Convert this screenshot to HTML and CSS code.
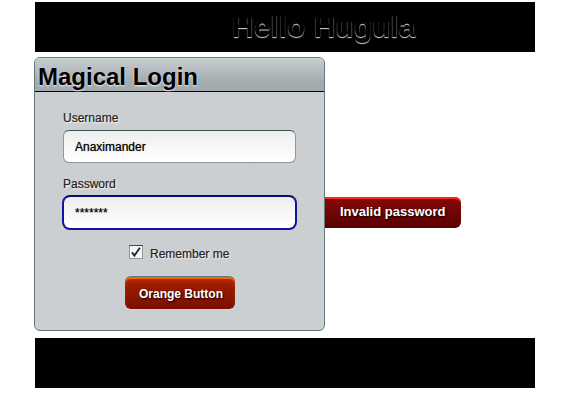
FILE: index.html
```html
<!DOCTYPE html>
<html lang="en">
<head>
<meta charset="utf-8">
<title>Hello Hugula</title>
<link rel="stylesheet" href="styles.css">
</head>
<body>
<div class="page">
  <header class="banner"><h1>Hello Hugula</h1></header>
  <main class="login">
    <form class="panel">
      <h2 class="panel-title">Magical Login</h2>
      <div class="fields">
        <label for="user">Username</label>
        <input class="field" id="user" type="text" value="Anaximander">
        <label for="pass">Password</label>
        <input class="field active" id="pass" type="text" value="*******">
        <label class="remember">
          <svg class="check" viewBox="0 0 14 14" width="14" height="14">
            <rect class="box" x=".5" y=".5" width="13" height="13"/>
            <path class="edge" d="M0 .5H14"/>
            <path class="tick" d="M3 7.4 5.4 10.6 10.9 2.8"/>
          </svg>
          <span>Remember me</span>
        </label>
        <button class="submit" type="button">Orange Button</button>
      </div>
    </form>
    <div class="error">Invalid password</div>
  </main>
  <footer class="banner"></footer>
</div>
</body>
</html>
```
FILE: styles.css
```css
* { box-sizing: border-box; }
body {
  margin: 0;
  background: #fff;
  font: 12px/14px "Liberation Sans", Arial, sans-serif;
  color: #222;
}
.page {
  width: 500px;
  margin: 0 0 0 35px;
  padding-top: 2px;
}
.banner {
  height: 50px;
  background: #000;
  padding-left: 197px;
}
h1 {
  margin: 0;
  font-size: 30px;
  line-height: 49px;
  color: #000;
  text-shadow: 0 1px 1px rgba(255, 255, 255, .85);
  will-change: transform;
}
.login {
  display: flex;
  align-items: flex-start;
  margin: 5px 0 7px -1px;
}
.panel {
  width: 291px;
  height: 274px;
  border: 1px solid #63797b;
  border-radius: 6px;
  background: #cccfd2;
  overflow: hidden;
}
.panel-title {
  height: 34px;
  margin: 0;
  padding-left: 3px;
  border-bottom: 1px solid #000;
  box-shadow: inset 0 1px #d3d8da;
  background: linear-gradient(#c8cdd0, #a2abae 75%);
  font-size: 24px;
  line-height: 37px;
  color: #000;
  text-shadow: 0 1px 2px #f3eef4;
}
.fields {
  display: flex;
  flex-direction: column;
  padding: 19px 28px 0;
  text-shadow: 1px 1px 2px #fff;
}
.fields label { -webkit-text-stroke: .2px #222; }
.field {
  width: 233px;
  height: 33px;
  margin: 5px 0 14px;
  padding: 0 11px;
  border: 1px solid #8a999b;
  border-top-color: #3b5053;
  border-radius: 6px;
  background: linear-gradient(#eee, #fff);
  font: inherit;
  color: #000;
  text-shadow: 0 0 1px rgba(0, 0, 0, .6);
  outline: 0;
}
.field.active {
  width: 235px;
  height: 35px;
  margin: 4px -1px 15px;
  border: 2px solid #10159a;
  border-top-color: #080d72;
  border-radius: 8px;
}
.remember {
  display: flex;
  gap: 7px;
  margin: 0 0 16px 66px;
  height: 15px;
}
.remember span { padding-top: 2px; }
.box { fill: #f4f4f4; stroke: #8a999b; }
.edge { stroke: #3b5053; }
.tick { fill: none; stroke: #222; stroke-width: 1.8; }
.submit {
  width: 110px;
  height: 33px;
  margin-left: 62px;
  padding: 2px 0 0 2px;
  border: 0;
  border-top: 1px solid #6b7a78;
  border-radius: 6px;
  background: linear-gradient(#a52000, #7a0f00);
  box-shadow: inset 0 2px #fa6400, inset 0 5px 4px -1px #b53000;
  font: bold 12px/14px "Liberation Sans", Arial, sans-serif;
  color: #fff;
  text-shadow: 1px 1px 2px #000;
}
.error {
  width: 136px;
  height: 31px;
  margin-top: 140px;
  padding-left: 15px;
  border-radius: 0 6px 6px 0;
  background: linear-gradient(#850b08, #590000);
  box-shadow: inset 0 2px #fa271b;
  font-size: 13px;
  font-weight: bold;
  line-height: 30px;
  color: #fff;
  text-shadow: 1px 1px 2px #000;
}
```
